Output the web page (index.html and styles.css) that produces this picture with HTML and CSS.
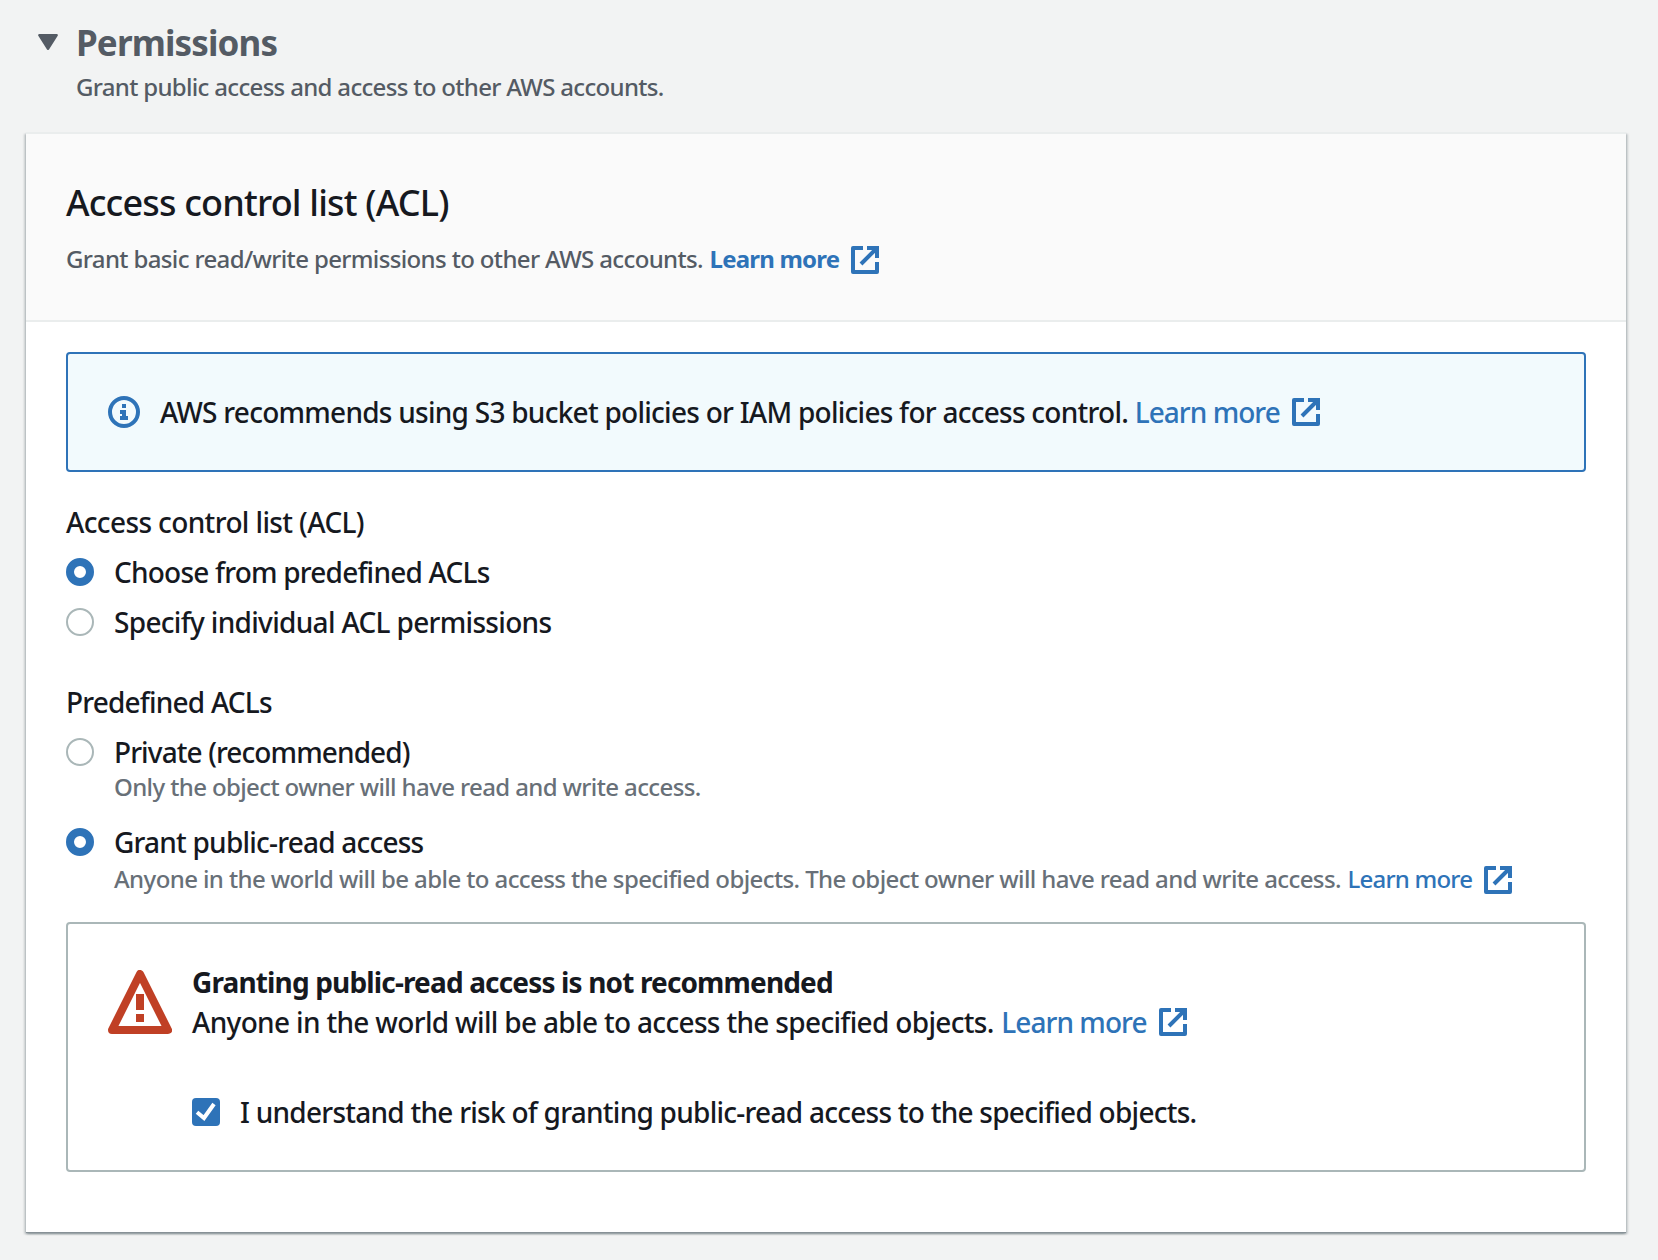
FILE: index.html
```
<!DOCTYPE html>
<html lang="en">
<head>
<meta charset="utf-8">
<title>Permissions</title>
<link rel="stylesheet" href="styles.css">
</head>
<body>
<svg class="defs" aria-hidden="true">
  <symbol id="external" viewBox="0 0 28 28">
    <path d="M12 2H2v24h24V16" fill="none" stroke="currentColor" stroke-width="4" stroke-linejoin="round"/>
    <path d="M16 2h10v10M10 18L26 2" fill="none" stroke="currentColor" stroke-width="4"/>
  </symbol>
</svg>

<header class="section-header">
  <svg class="caret" viewBox="0 0 20 16"><path d="M1.3 1.2h17.4L10 14.8z" fill="currentColor" stroke="currentColor" stroke-width="2.4" stroke-linejoin="round"/></svg>
  <div>
    <h2 class="section-title">Permissions</h2>
    <p class="line small section-desc">Grant public access and access to other AWS accounts.</p>
  </div>
</header>

<section class="card">
  <header class="card-header">
    <h3 class="card-title">Access control list (ACL)</h3>
    <p class="line small card-desc">Grant basic read/write permissions to other AWS accounts. <a class="link bold">Learn more<svg class="ext"><use href="#external"/></svg></a></p>
  </header>
  <div class="card-body">
    <div class="box info">
      <svg class="info-icon" viewBox="0 0 32 32"><circle cx="16" cy="16" r="14" fill="none" stroke="currentColor" stroke-width="4"/><path d="M14 8h4v4h-4zM12 14h6v6h2v4h-8v-4h2v-2h-2z" fill="currentColor"/></svg>
      <p class="line info-text">AWS recommends using S3 bucket policies or IAM policies for access control. <a class="link">Learn more<svg class="ext"><use href="#external"/></svg></a></p>
    </div>

    <fieldset class="group">
      <legend class="line label-acl">Access control list (ACL)</legend>
      <label class="option"><span class="radio checked"></span><span class="line choose">Choose from predefined ACLs</span></label>
      <label class="option"><span class="radio"></span><span class="line specify">Specify individual ACL permissions</span></label>
    </fieldset>

    <fieldset class="group">
      <legend class="line predefined">Predefined ACLs</legend>
      <label class="option"><span class="radio"></span><span class="line private">Private (recommended)</span></label>
      <p class="line small hint hint-private">Only the object owner will have read and write access.</p>
      <label class="option"><span class="radio checked"></span><span class="line public">Grant public-read access</span></label>
      <p class="line small hint hint-public">Anyone in the world will be able to access the specified objects. The object owner will have read and write access. <a class="link">Learn more<svg class="ext"><use href="#external"/></svg></a></p>
    </fieldset>

    <div class="box warning">
      <svg class="warning-icon" viewBox="0 0 64 64"><path d="M32 4L60 60H4z" fill="none" stroke="currentColor" stroke-width="8" stroke-linejoin="round"/><path d="M28 24h8v16h-8zM28 44h8v8h-8z" fill="currentColor"/></svg>
      <div>
        <p class="line strong">Granting public-read access is not recommended</p>
        <p class="line warning-text">Anyone in the world will be able to access the specified objects. <a class="link">Learn more<svg class="ext"><use href="#external"/></svg></a></p>
        <label class="option consent"><svg class="checkbox" viewBox="0 0 28 28"><rect width="28" height="28" rx="4" fill="currentColor"/><path d="M5 14.3l7 5.7L22 6" fill="none" stroke="#fff" stroke-width="4"/></svg><span class="line consent-text">I understand the risk of granting public-read access to the specified objects.</span></label>
      </div>
    </div>
  </div>
</section>
</body>
</html>
```
FILE: styles.css
```
* { box-sizing: border-box; }
body {
  margin: 0;
  padding: 22px 32px 28px 26px;
  background: #f2f3f3;
  color: #16191f;
  font-family: "Noto Sans", sans-serif;
  font-weight: 500;
}
h2, h3, p, fieldset, legend { margin: 0; padding: 0; border: 0; }
.defs { display: none; }
svg { flex: none; display: block; }

.line { display: flex; align-items: center; white-space: pre; font-size: 28px; line-height: 38px; height: 40px; padding-top: 2px; }
.small { font-size: 24px; line-height: 40px; padding-top: 0; }
.link { display: flex; align-items: center; color: #2e73b8; letter-spacing: -0.95px; }
.small .link { margin-left: 1px; letter-spacing: -0.8px; }
.bold { font-weight: 700; }
.ext { width: 28px; height: 28px; margin-left: 12px; }
.small .ext { margin-top: 2px; }

.section-header { display: flex; height: 110px; padding-left: 12px; color: #545b64; }
.caret { width: 20px; height: 16px; margin: 12px 18px 0 0; }
.section-title { height: 40px; padding-top: 1px; font-size: 35px; line-height: 40px; font-weight: 700; letter-spacing: -0.87px; }
.section-desc { margin-top: 5px; letter-spacing: -0.68px; }

.card {
  height: 1100px;
  border-top: 2px solid #eaeded;
  background: #fff;
  box-shadow: 0 1px 0 0 #879196, 0 2px 2px 0 rgba(0, 28, 36, .3), 2px 2px 2px 0 rgba(0, 28, 36, .15), -2px 2px 2px 0 rgba(0, 28, 36, .15);
}
.card-header { height: 188px; padding: 48px 40px 0; background: #fafafa; border-bottom: 2px solid #eaeded; }
.card-title { height: 40px; padding-top: 1px; font-size: 36px; line-height: 40px; font-weight: 500; letter-spacing: -0.82px; }
.card-desc { margin-top: 17px; color: #545b64; letter-spacing: -0.64px; }
.card-body { padding: 30px 40px 0; }

.box { display: flex; border: 2px solid #aab7b8; border-radius: 4px; }
.info { height: 120px; padding: 37px 40px 0; background: #f2fafd; border-color: #2e73b8; }
.info-icon { width: 32px; height: 32px; margin: 5px 20px 0 0; color: #2e73b8; }
.info-text { letter-spacing: -0.74px; }

.group { margin-top: 29px; }
.group + .group { margin-top: 40px; }
.option { display: flex; align-items: center; gap: 20px; height: 40px; margin-top: 10px; }
.radio { width: 28px; height: 28px; margin-top: 2px; border: 2px solid #aab7b8; border-radius: 50%; background: #fff; }
.radio.checked { border: 8px solid #2e73b8; }
.hint { margin-left: 48px; color: #687078; letter-spacing: -0.6px; }
.hint-private { margin-top: -4px; margin-bottom: 14px; letter-spacing: -0.62px; }
.hint-public { margin-top: -2px; }
.hint-private + .option { margin-top: 0; }
.label-acl { letter-spacing: -0.62px; }
.choose { letter-spacing: -0.79px; }
.specify { letter-spacing: -0.68px; }
.predefined { letter-spacing: -0.8px; }
.private { letter-spacing: -0.9px; }
.public { letter-spacing: -0.78px; }

.warning { height: 250px; margin-top: 23px; padding: 37px 40px 0; }
.warning-icon { width: 64px; height: 64px; margin: 9px 20px 0 0; color: #c04025; }
.strong { font-weight: 700; letter-spacing: -0.85px; }
.warning-text { letter-spacing: -0.67px; }
.warning-text .link { margin-left: 1px; }
.consent { margin-top: 50px; }
.checkbox { width: 28px; height: 28px; margin-top: 2px; color: #2e73b8; }
.consent-text { letter-spacing: -0.74px; }
```
